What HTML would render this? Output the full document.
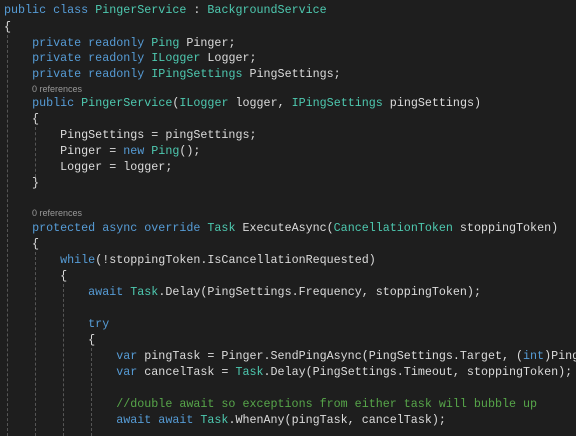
<!DOCTYPE html>
<html style="overflow:hidden"><head><meta charset="utf-8"><style>
html,body{overflow:hidden}
body{margin:0;background:#1e1e1e;width:576px;height:436px;position:relative}
.l{position:absolute;left:4px;right:0;overflow:hidden;height:16px;line-height:16px;font-family:"Liberation Mono",monospace;font-size:11.7px;color:#dcdcdc;white-space:pre}
.c{position:absolute;left:32px;height:14px;line-height:14px;font-family:"Liberation Sans",sans-serif;font-size:9px;color:#999;white-space:pre}
.k{color:#569cd6}.t{color:#4ec9b0}.m{color:#57a64a}
.g{position:absolute;width:0;border-left:1px dashed #555}
</style></head><body>
<div class="g" style="left:7px;top:35px;height:401px"></div>
<div class="g" style="left:35px;top:127px;height:50px"></div>
<div class="g" style="left:35px;top:252px;height:184px"></div>
<div class="g" style="left:63px;top:284px;height:152px"></div>
<div class="g" style="left:91px;top:348px;height:88px"></div>
<div class="l" style="top:2px"><span class="k">public class</span> <span class="t">PingerService</span> : <span class="t">BackgroundService</span></div>
<div class="l" style="top:19px">{</div>
<div class="l" style="top:35px">    <span class="k">private readonly</span> <span class="t">Ping</span> Pinger;</div>
<div class="l" style="top:50px">    <span class="k">private readonly</span> <span class="t">ILogger</span> Logger;</div>
<div class="l" style="top:66px">    <span class="k">private readonly</span> <span class="t">IPingSettings</span> PingSettings;</div>
<div class="c" style="top:82px">0 references</div>
<div class="l" style="top:95px">    <span class="k">public</span> <span class="t">PingerService</span>(<span class="t">ILogger</span> logger, <span class="t">IPingSettings</span> pingSettings)</div>
<div class="l" style="top:111px">    {</div>
<div class="l" style="top:127px">        PingSettings = pingSettings;</div>
<div class="l" style="top:143px">        Pinger = <span class="k">new</span> <span class="t">Ping</span>();</div>
<div class="l" style="top:159px">        Logger = logger;</div>
<div class="l" style="top:175px">    }</div>
<div class="c" style="top:206px">0 references</div>
<div class="l" style="top:220px">    <span class="k">protected async override</span> <span class="t">Task</span> ExecuteAsync(<span class="t">CancellationToken</span> stoppingToken)</div>
<div class="l" style="top:236px">    {</div>
<div class="l" style="top:252px">        <span class="k">while</span>(!stoppingToken.IsCancellationRequested)</div>
<div class="l" style="top:268px">        {</div>
<div class="l" style="top:284px">            <span class="k">await</span> <span class="t">Task</span>.Delay(PingSettings.Frequency, stoppingToken);</div>
<div class="l" style="top:316px">            <span class="k">try</span></div>
<div class="l" style="top:332px">            {</div>
<div class="l" style="top:348px">                <span class="k">var</span> pingTask = Pinger.SendPingAsync(PingSettings.Target, (<span class="k">int</span>)PingSettings.Timeout);</div>
<div class="l" style="top:364px">                <span class="k">var</span> cancelTask = <span class="t">Task</span>.Delay(PingSettings.Timeout, stoppingToken);</div>
<div class="l" style="top:396px">                <span class="m">//double await so exceptions from either task will bubble up</span></div>
<div class="l" style="top:412px">                <span class="k">await await</span> <span class="t">Task</span>.WhenAny(pingTask, cancelTask);</div>
</body></html>
